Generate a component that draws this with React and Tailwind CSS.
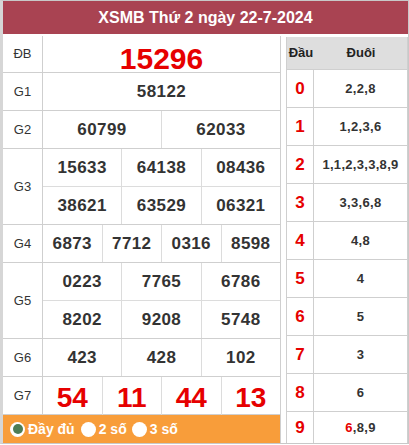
import React from "react"

const rows = [
  { label: "ĐB", h: "h-[37px]", lines: [["15296"]], big: true },
  { label: "G1", h: "h-[38px]", lines: [["58122"]] },
  { label: "G2", h: "h-[38px]", lines: [["60799", "62033"]] },
  { label: "G3", h: "h-[76px]", lines: [["15633", "64138", "08436"], ["38621", "63529", "06321"]] },
  { label: "G4", h: "h-[38px]", lines: [["6873", "7712", "0316", "8598"]] },
  { label: "G5", h: "h-[76px]", lines: [["0223", "7765", "6786"], ["8202", "9208", "5748"]] },
  { label: "G6", h: "h-[38px]", lines: [["423", "428", "102"]] },
  { label: "G7", h: "h-[38px]", lines: [["54", "11", "44", "13"]], g7: true },
]

const loto = [
  ["0", "2,2,8"],
  ["1", "1,2,3,6"],
  ["2", "1,1,2,3,3,8,9"],
  ["3", "3,3,6,8"],
  ["4", "4,8"],
  ["5", "4"],
  ["6", "5"],
  ["7", "3"],
  ["8", "6"],
  ["9", "6,8,9"],
]

function PrizeRow({ row }) {
  return (
    <div className={`flex border-b border-[#cfcfcf] ${row.h}`}>
      <div className="w-[40px] shrink-0 border-r border-[#cfcfcf] flex items-center justify-center text-[13px] text-[#333]">
        {row.label}
      </div>
      <div className="flex-1 flex flex-col">
        {row.lines.map((line, i) => (
          <div key={i} className={`flex-1 flex ${i > 0 ? "border-t border-[#dcdcdc]" : ""}`}>
            {line.map((n, j) => (
              <div
                key={j}
                className={`flex-1 flex items-center justify-center font-bold ${
                  j < line.length - 1 ? "border-r border-[#dcdcdc]" : ""
                } ${
                  row.big
                    ? "text-[30px] text-[#e60000]"
                    : row.g7
                    ? "text-[28px] text-[#e60000]"
                    : "text-[17px] text-[#333] tracking-[0.4px]"
                }`}
              >
                {n}
              </div>
            ))}
          </div>
        ))}
      </div>
    </div>
  )
}

const Radio = ({ checked }) => (
  <span className="w-[15px] h-[15px] rounded-full bg-white flex items-center justify-center shrink-0">
    {checked && <span className="w-[10px] h-[10px] rounded-full bg-[#4e7d55]"></span>}
  </span>
)

export default function App() {
  return (
    <div className="w-[409px] h-[444px] overflow-hidden bg-white border border-[#c8c8c8] border-l-[3px] border-l-[#d6d6d6] font-['Liberation_Sans',Arial,sans-serif]">
      <div className="h-[33px] bg-[#a94352] flex items-center justify-center text-white font-bold text-[16px]">
        XSMB Thứ 2 ngày 22-7-2024
      </div>

      <div className="flex mt-[2px]">
        {/* bang ket qua */}
        <div className="w-[278px] shrink-0 border-r border-[#cfcfcf] flex flex-col">
          {rows.map(r => <PrizeRow key={r.label} row={r} />)}
          <div className="h-[28px] bg-[#f89d3a] flex items-center pl-[7px] text-white font-bold text-[14px]">
            <Radio checked />
            <span className="ml-[3px] mr-[6px]">Đầy đủ</span>
            <Radio />
            <span className="ml-[3px] mr-[5px]">2 số</span>
            <Radio />
            <span className="ml-[3px]">3 số</span>
          </div>
        </div>

        {/* bang loto dau duoi */}
        <div className="ml-[5px] mt-px flex-1 h-[407px] flex flex-col border-x border-[#cfcfcf]">
          <div className="h-[33px] shrink-0 bg-[#dedede] flex items-center text-[13px] font-bold text-[#222] border-b border-[#cfcfcf]">
            <div className="w-[28px] text-center">Đầu</div>
            <div className="flex-1 text-center">Đuôi</div>
          </div>
          {loto.map(([d, v], i) => (
            <div
              key={d}
              className={`flex border-b border-[#cfcfcf] ${i === 9 ? "flex-1" : "h-[38px] shrink-0"}`}
            >
              <div className="w-[27px] border-r border-[#cfcfcf] flex items-center justify-center text-[17px] font-bold text-[#e60000]">
                {d}
              </div>
              <div className="flex-1 flex items-center justify-center text-[13px] tracking-[0.3px] font-bold text-[#333]">
                {d === "9" ? (
                  <span><span className="text-[#e60000]">6</span>,8,9</span>
                ) : v}
              </div>
            </div>
          ))}
        </div>
      </div>
    </div>
  )
}
